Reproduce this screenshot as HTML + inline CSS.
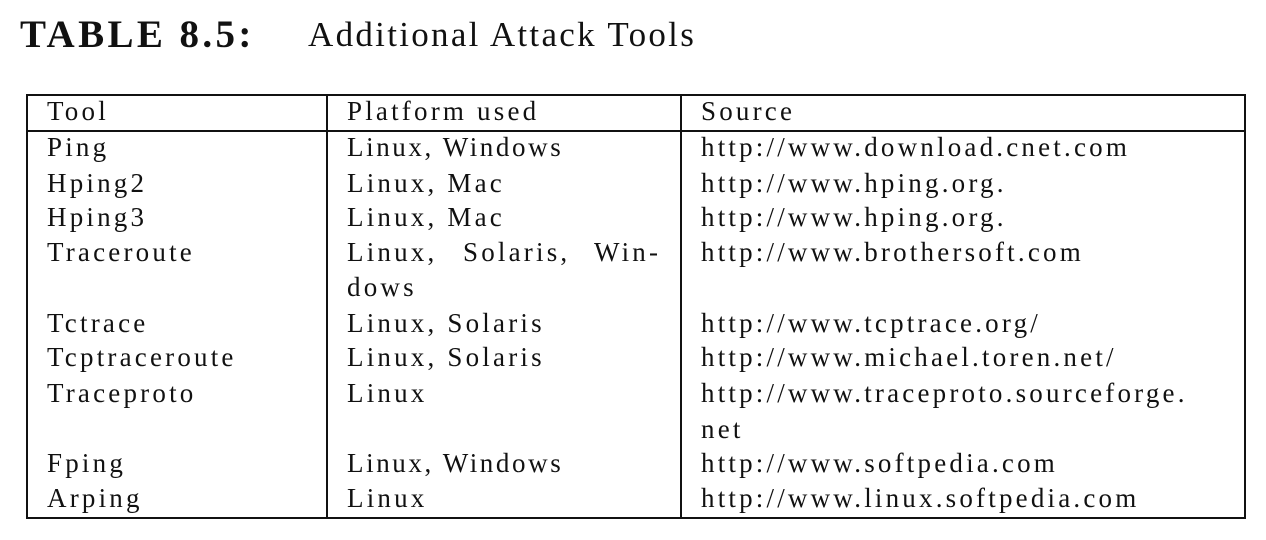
<!DOCTYPE html>
<html><head><meta charset="utf-8"><style>
body{margin:0;width:1266px;height:540px;background:#fff;position:relative;overflow:hidden;font-family:"Liberation Serif",serif;color:#111}
.t{position:absolute;white-space:nowrap;font-size:27px;letter-spacing:3.2px;line-height:1}
.l{position:absolute;background:#111}
</style></head><body>
<div class="t" style="left:20px;top:15px;font-size:39px;font-weight:bold;letter-spacing:3.4px">TABLE 8.5:</div>
<div class="t" style="left:308px;top:17px;font-size:35px;letter-spacing:2.3px">Additional Attack Tools</div>

<div class="l" style="left:26px;top:94px;width:1220px;height:2px"></div>
<div class="l" style="left:26px;top:130px;width:1220px;height:2px"></div>
<div class="l" style="left:26px;top:517px;width:1220px;height:2px"></div>
<div class="l" style="left:26px;top:94px;width:2px;height:425px"></div>
<div class="l" style="left:326px;top:94px;width:2px;height:425px"></div>
<div class="l" style="left:680px;top:94px;width:2px;height:425px"></div>
<div class="l" style="left:1244px;top:94px;width:2px;height:425px"></div>

<div class="t" style="left:47px;top:98px">Tool</div>
<div class="t" style="left:347px;top:98px">Platform used</div>
<div class="t" style="left:701px;top:98px">Source</div>

<div class="t" style="left:47px;top:134px">Ping</div>
<div class="t" style="left:347px;top:134px;letter-spacing:2.6px">Linux, Windows</div>
<div class="t" style="left:701px;top:134px">http://www.download.cnet.com</div>

<div class="t" style="left:47px;top:170px">Hping2</div>
<div class="t" style="left:347px;top:170px">Linux, Mac</div>
<div class="t" style="left:701px;top:170px">http://www.hping.org.</div>

<div class="t" style="left:47px;top:204px">Hping3</div>
<div class="t" style="left:347px;top:204px">Linux, Mac</div>
<div class="t" style="left:701px;top:204px">http://www.hping.org.</div>

<div class="t" style="left:47px;top:239px">Traceroute</div>
<div class="t" style="left:347px;top:239px">Linux,</div>
<div class="t" style="left:463px;top:239px">Solaris,</div>
<div class="t" style="left:594px;top:239px">Win-</div>
<div class="t" style="left:701px;top:239px">http://www.brothersoft.com</div>
<div class="t" style="left:347px;top:274px">dows</div>

<div class="t" style="left:47px;top:310px">Tctrace</div>
<div class="t" style="left:347px;top:310px">Linux, Solaris</div>
<div class="t" style="left:701px;top:310px">http://www.tcptrace.org/</div>

<div class="t" style="left:47px;top:344px">Tcptraceroute</div>
<div class="t" style="left:347px;top:344px">Linux, Solaris</div>
<div class="t" style="left:701px;top:344px">http://www.michael.toren.net/</div>

<div class="t" style="left:47px;top:380px">Traceproto</div>
<div class="t" style="left:347px;top:380px">Linux</div>
<div class="t" style="left:701px;top:380px">http://www.traceproto.sourceforge.</div>
<div class="t" style="left:701px;top:416px">net</div>

<div class="t" style="left:47px;top:450px">Fping</div>
<div class="t" style="left:347px;top:450px;letter-spacing:2.6px">Linux, Windows</div>
<div class="t" style="left:701px;top:450px">http://www.softpedia.com</div>

<div class="t" style="left:47px;top:485px">Arping</div>
<div class="t" style="left:347px;top:485px">Linux</div>
<div class="t" style="left:701px;top:485px">http://www.linux.softpedia.com</div>
</body></html>
